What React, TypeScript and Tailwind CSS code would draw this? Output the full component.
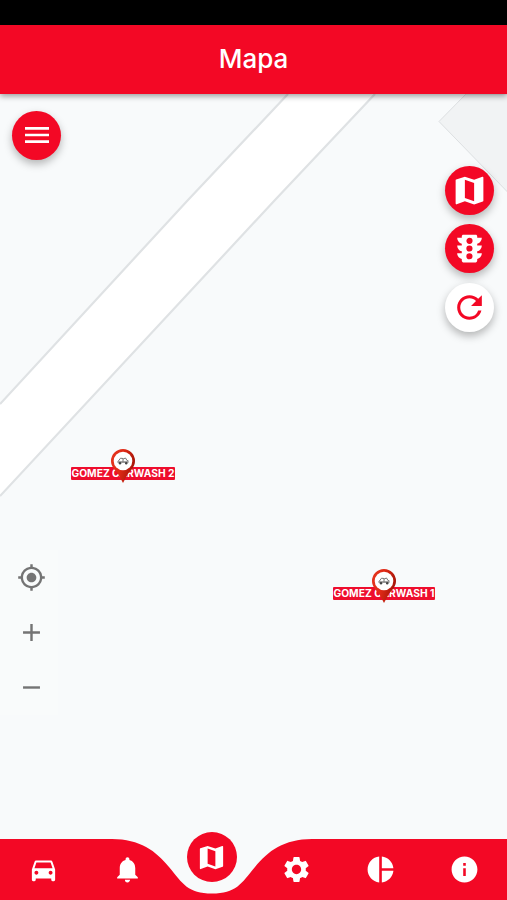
import type { ReactNode } from "react";
import {
  MdAdd,
  MdDirectionsCar,
  MdGpsFixed,
  MdInfo,
  MdMap,
  MdMenu,
  MdNotifications,
  MdPieChart,
  MdRefresh,
  MdRemove,
  MdSettings,
  MdTraffic,
} from "react-icons/md";

interface Place {
  id: number;
  name: string;
  position: string;
  width: number;
}

const places: Place[] = [
  { id: 2, name: "GOMEZ CARWASH 2", position: "left-[71px] top-[354px] w-[104px]", width: 103 },
  { id: 1, name: "GOMEZ CARWASH 1", position: "left-[333px] top-[474px] w-[102px]", width: 101 },
];

function RoundButton({ label, light, children }: { label: string; light?: boolean; children: ReactNode }) {
  return (
    <button
      aria-label={label}
      className={`flex size-[49px] items-center justify-center rounded-full shadow-[0_4px_8px_rgba(0,0,0,0.28)] ${
        light ? "bg-white text-[#f30825]" : "bg-[#f30825] text-white"
      }`}
    >
      {children}
    </button>
  );
}

function Pin() {
  return (
    <svg viewBox="0 0 26 36" className="h-9 w-[26px]">
      <defs>
        <linearGradient id="pin" x1="0" x2="1" y1="0" y2="0.3">
          <stop offset="0" stopColor="#e5361f" />
          <stop offset="0.5" stopColor="#e02a16" />
          <stop offset="1" stopColor="#a81508" />
        </linearGradient>
      </defs>
      <path d="M13 1A12 12 0 0 0 1 13C1 19 5.500 22.500 8.500 26.500L13 35L17.500 26.500C20.500 22.500 25 19 25 13A12 12 0 0 0 13 1z" fill="url(#pin)" />
      <circle cx="13" cy="13" r="9.300" fill="#fff" />
      {/* tow truck */}
      <path d="M8 13.500L10.500 10.200L13 10.500M13 14V11L15.500 10L17 12.500L18.500 13" fill="none" stroke="#666" strokeWidth="0.9" />
      <path d="M7.500 13.300h11v1.500h-11z" fill="#808080" />
      <circle cx="10" cy="15.300" r="1.200" fill="#444" />
      <circle cx="16.200" cy="15.300" r="1.200" fill="#444" />
    </svg>
  );
}

function MapCanvas() {
  return (
    <svg viewBox="0 0 507 806" className="absolute inset-0 h-[806px] w-[507px]">
      <path d="M288 0L188 106 0 310v92l275-296L375 0z" fill="#fff" />
      <path d="M288 0L188 106 0 310M375 0L275 106 0 402" fill="none" stroke="#dfe2e4" strokeWidth="2.200" />
      <path d="M466 0l-27 27.500 69 71V0z" fill="#f1f3f4" stroke="#dcdfe1" strokeWidth="1" />
    </svg>
  );
}

function PlaceMarker({ place }: { place: Place }) {
  return (
    <div className={`absolute flex h-[36px] items-end justify-center pb-[4px] ${place.position}`}>
      <div className="h-[13px] w-full rounded-[1px] bg-[#ee0d2d]">
        <svg className="block h-[13px] w-full overflow-visible">
          <text
            x="0.5"
            y="10"
            textLength={place.width}
            lengthAdjust="spacingAndGlyphs"
            className="fill-white font-['Inter',sans-serif] text-[10px] font-bold"
          >
            {place.name}
          </text>
        </svg>
      </div>
      <div className="absolute bottom-0 left-1/2 -translate-x-1/2">
        <Pin />
      </div>
    </div>
  );
}

function BottomNav() {
  return (
    <nav className="relative h-[70px] w-full">
      <svg viewBox="0 0 507 61" className="absolute bottom-0 left-0 h-[61px] w-[507px]">
        <path
          d="M0 0H112C140 0 156 12 169 28C183 45 188 54.500 212 54.500C236 54.500 241 45 255 28C268 12 284 0 312 0H507V61H0Z"
          fill="#f30825"
        />
      </svg>
      <div className="relative grid h-full grid-cols-6 pl-px text-[31px] text-white">
        <button aria-label="Vehículos" className="flex items-end justify-center pb-[15px]">
          <MdDirectionsCar />
        </button>
        <button aria-label="Alertas" className="flex items-end justify-center pb-[15px]">
          <MdNotifications />
        </button>
        <button aria-label="Mapa" className="flex items-start justify-center">
          <span className="mt-[2px] flex size-[50px] items-center justify-center rounded-full bg-[#f30825]">
            <MdMap />
          </span>
        </button>
        <button aria-label="Ajustes" className="flex items-end justify-center pb-[15px]">
          <MdSettings />
        </button>
        <button aria-label="Reportes" className="flex items-end justify-center pb-[15px]">
          <MdPieChart />
        </button>
        <button aria-label="Información" className="flex items-end justify-center pb-[15px]">
          <MdInfo />
        </button>
      </div>
    </nav>
  );
}

export default function App() {
  return (
    <div className="flex h-[900px] w-[507px] flex-col overflow-hidden bg-[#f8fafb] font-['Inter',sans-serif]">
      <div className="h-[25px] shrink-0 bg-black" />
      <header className="relative z-10 flex h-[69px] shrink-0 items-center justify-center bg-[#f30825] pb-[3px] shadow-[0_2px_6px_rgba(0,0,0,0.4)]">
        <h1 className="text-[26px] font-medium text-white">Mapa</h1>
      </header>

      <main className="relative flex flex-1 flex-col">
        <MapCanvas />
        {places.map((place) => (
          <PlaceMarker key={place.id} place={place} />
        ))}

        <div className="relative flex flex-1 justify-between">
          <div className="flex flex-col">
            <div className="pl-3 pt-[16.5px]">
              <RoundButton label="Menú">
                <MdMenu size={32} />
              </RoundButton>
            </div>
            {/* Zoom controls */}
            <div className="mt-[390px] flex w-[58px] flex-col items-center bg-[#f9fbfb] pl-[5px] text-[#747474]">
              <button aria-label="Mi ubicación" className="flex h-[55px] items-center">
                <MdGpsFixed size={29} />
              </button>
              <button aria-label="Acercar" className="flex h-[55px] items-center">
                <MdAdd size={29} />
              </button>
              <button aria-label="Alejar" className="flex h-[55px] items-center">
                <MdRemove size={29} />
              </button>
            </div>
          </div>

          <div className="flex flex-col gap-[9.7px] pr-[13.5px] pt-[71.5px]">
            <RoundButton label="Tipo de mapa">
              <MdMap size={37} />
            </RoundButton>
            <RoundButton label="Tráfico">
              <MdTraffic size={37} />
            </RoundButton>
            <RoundButton label="Actualizar" light>
              <MdRefresh size={37} />
            </RoundButton>
          </div>
        </div>

        <BottomNav />
      </main>
    </div>
  );
}
